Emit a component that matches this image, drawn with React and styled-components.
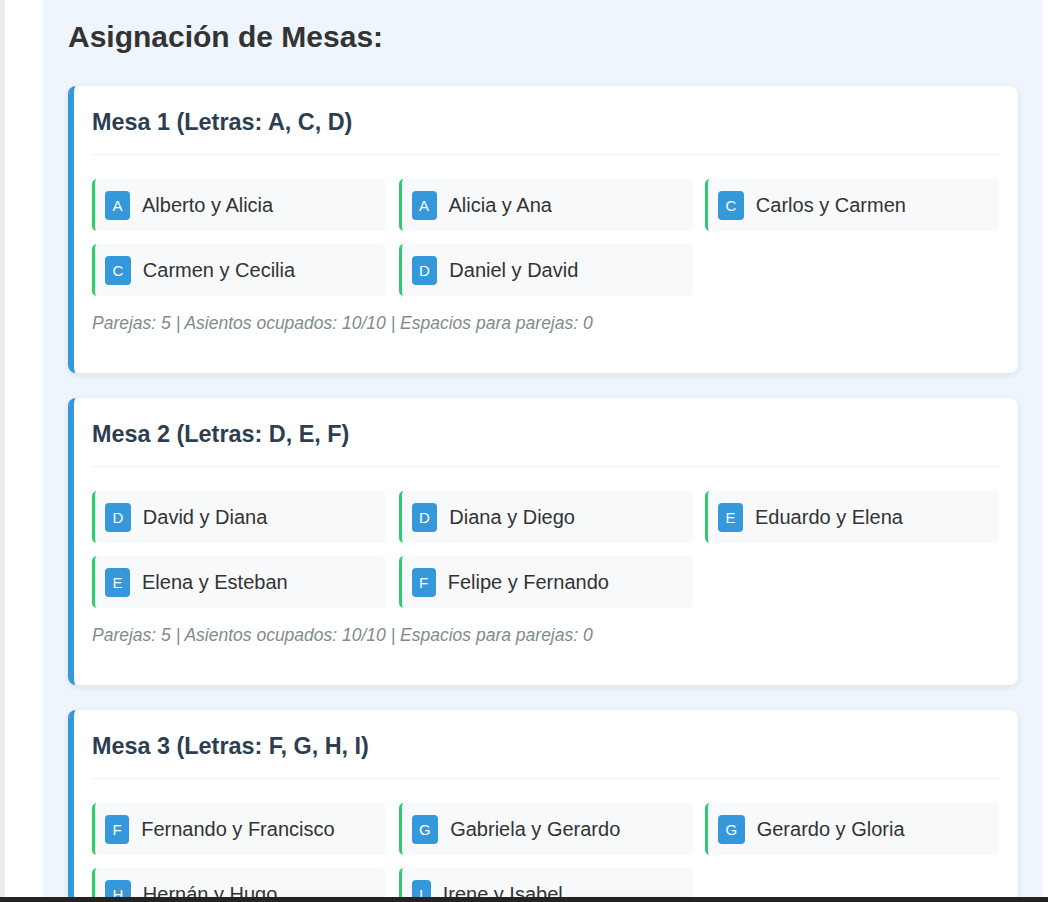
import React from "react";
import styled, { createGlobalStyle } from "styled-components";

const Global = createGlobalStyle`
  html, body { margin: 0; padding: 0; overflow: hidden; background: #ffffff; }
  body { font-family: "Liberation Sans", Arial, sans-serif; color: #333; }
`;

const Shell = styled.div`
  display: flex;
  min-height: 902px;
  border-left: 5px solid #ececec;
  padding-left: 38px;
`;

const Panel = styled.main`
  width: 1000px;
  box-sizing: border-box;
  background: #eef5fd;
  padding: 19.5px 25px 40px 25px;
`;

const Title = styled.h2`
  margin: 0 0 32px 0;
  font-size: 30px;
  line-height: 34.5px;
  font-weight: 700;
  color: #333;
`;

const Tables = styled.div`
  display: flex;
  flex-direction: column;
  gap: 25px;
`;

const Card = styled.section`
  background: #ffffff;
  border-left: 6px solid #3498db;
  border-radius: 8px;
  box-shadow: 0 2px 6px rgba(0, 0, 0, 0.09);
  padding: 22.5px 19px 40px 18px;
`;

const CardTitle = styled.h3`
  margin: 0;
  padding-bottom: 18.5px;
  border-bottom: 1px solid #eeeeee;
  font-size: 23.4px;
  line-height: 27px;
  font-weight: 700;
  color: #2c3e50;
`;

const Couples = styled.div`
  display: grid;
  grid-template-columns: repeat(3, 1fr);
  gap: 13px 12.5px;
  margin-top: 24px;
`;

const Couple = styled.div`
  display: flex;
  align-items: center;
  height: 52px;
  box-sizing: border-box;
  background: #f8f9fa;
  border-left: 3px solid #2ecc71;
  border-radius: 5px;
  padding: 0 10px;
`;

const Badge = styled.span`
  display: inline-block;
  background: #3498db;
  color: #ffffff;
  font-size: 15px;
  line-height: 29px;
  height: 29px;
  padding: 0 7.5px;
  border-radius: 4px;
  margin-right: 12px;
`;

const Name = styled.span`
  font-size: 20px;
  color: #333;
`;

const Stats = styled.p`
  margin: 17px 0 0 0;
  font-size: 17.5px;
  line-height: 20px;
  font-style: italic;
  color: #7f8c8d;
`;

const BottomBar = styled.div`
  position: fixed;
  left: 0;
  right: 0;
  bottom: 0;
  height: 5px;
  background: #232323;
`;

const mesas = [
  {
    title: "Mesa 1 (Letras: A, C, D)",
    couples: [
      ["A", "Alberto y Alicia"],
      ["A", "Alicia y Ana"],
      ["C", "Carlos y Carmen"],
      ["C", "Carmen y Cecilia"],
      ["D", "Daniel y David"],
    ],
  },
  {
    title: "Mesa 2 (Letras: D, E, F)",
    couples: [
      ["D", "David y Diana"],
      ["D", "Diana y Diego"],
      ["E", "Eduardo y Elena"],
      ["E", "Elena y Esteban"],
      ["F", "Felipe y Fernando"],
    ],
  },
  {
    title: "Mesa 3 (Letras: F, G, H, I)",
    couples: [
      ["F", "Fernando y Francisco"],
      ["G", "Gabriela y Gerardo"],
      ["G", "Gerardo y Gloria"],
      ["H", "Hernán y Hugo"],
      ["I", "Irene y Isabel"],
    ],
  },
];

export default function App() {
  return (
    <>
      <Global />
      <Shell>
        <Panel>
          <Title>Asignación de Mesas:</Title>
          <Tables>
            {mesas.map((m) => (
              <Card key={m.title}>
                <CardTitle>{m.title}</CardTitle>
                <Couples>
                  {m.couples.map(([l, n]) => (
                    <Couple key={n}>
                      <Badge>{l}</Badge>
                      <Name>{n}</Name>
                    </Couple>
                  ))}
                </Couples>
                <Stats>
                  Parejas: 5 | Asientos ocupados: 10/10 | Espacios para parejas: 0
                </Stats>
              </Card>
            ))}
          </Tables>
        </Panel>
      </Shell>
      <BottomBar />
    </>
  );
}
